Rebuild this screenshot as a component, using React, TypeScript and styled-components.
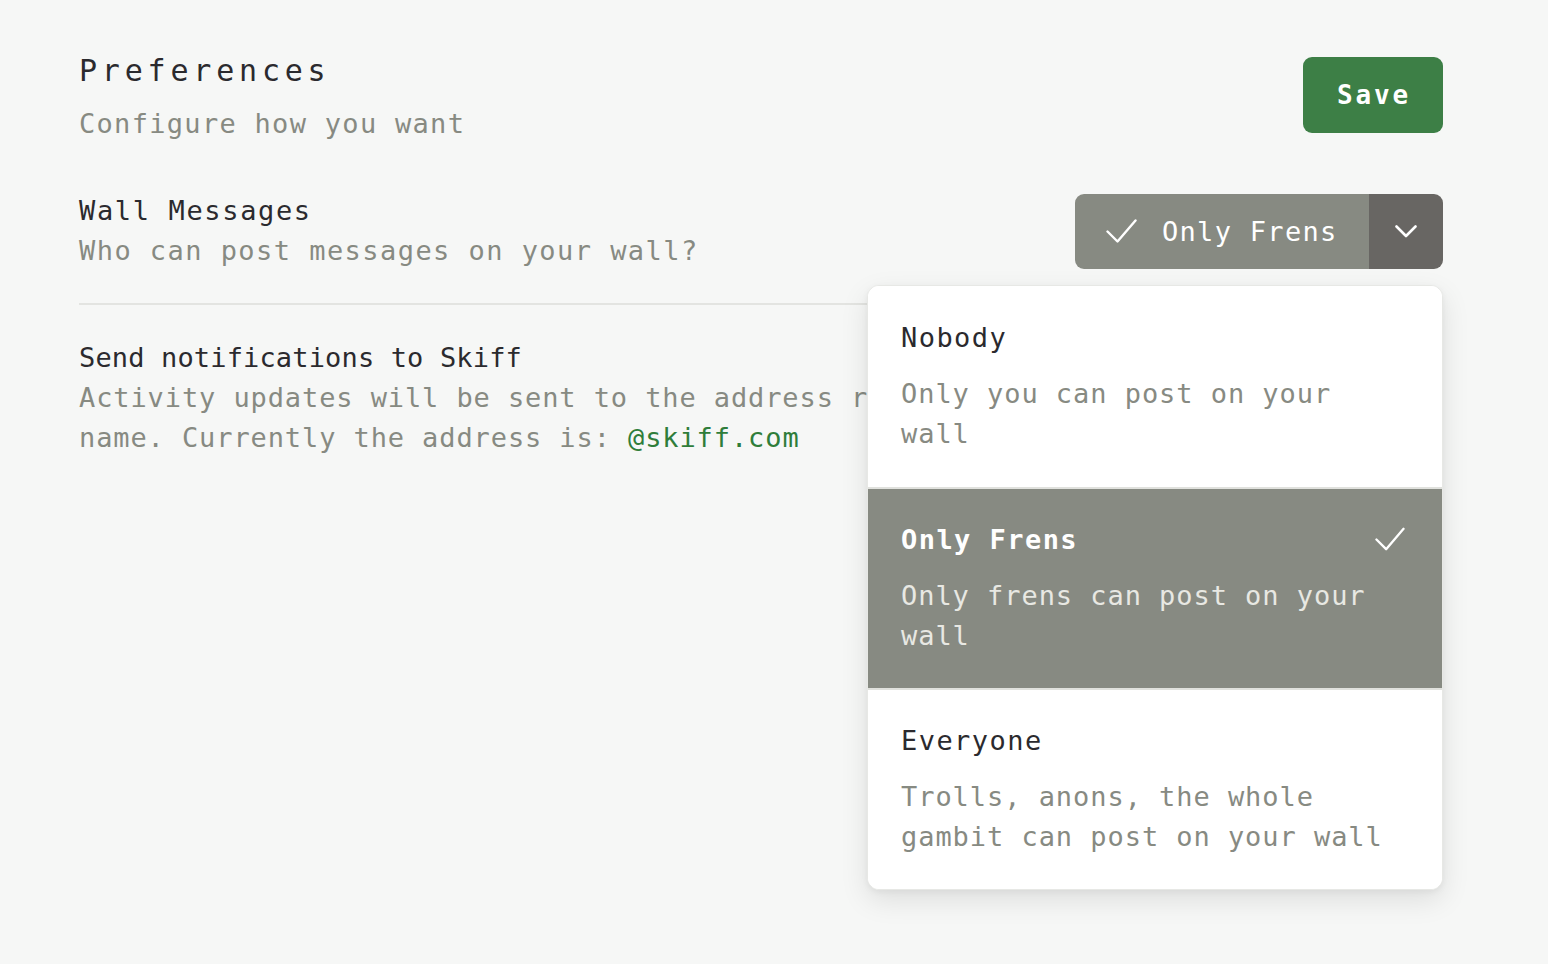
import React from "react";
import styled, { createGlobalStyle } from "styled-components";

const Global = createGlobalStyle`
  html, body { margin: 0; padding: 0; background: #f6f7f6; }
  body { font-family: "DejaVu Sans Mono", "Liberation Mono", monospace; }
  * { box-sizing: border-box; }
`;

const Page = styled.div`
  width: 1548px;
  min-height: 964px;
  padding: 51px 105px 0 79px;
`;

const Header = styled.header`
  display: flex;
  align-items: flex-start;
  justify-content: space-between;
`;

const Title = styled.h1`
  margin: 0;
  font-size: 30px;
  line-height: 40px;
  font-weight: 400;
  letter-spacing: 4.8px;
  color: #2b2a2e;
`;

const Subtitle = styled.p`
  margin: 13px 0 0;
  font-size: 27px;
  line-height: 40px;
  letter-spacing: 1.3px;
  color: #878a82;
`;

const SaveButton = styled.button`
  margin-top: 6px;
  width: 140px;
  height: 76px;
  border: none;
  border-radius: 9px;
  background: #3d7f46;
  color: #ffffff;
  font-family: inherit;
  font-size: 26px;
  font-weight: 700;
  letter-spacing: 2.8px;
  padding: 0 0 0 2px;
`;

const Section = styled.section<{ $divider?: boolean }>`
  display: flex;
  align-items: center;
  justify-content: space-between;
  padding-bottom: ${(p) => (p.$divider ? "32px" : "0")};
  border-bottom: ${(p) => (p.$divider ? "2px solid #e3e4e1" : "none")};
`;

const FirstSection = styled(Section)`
  margin-top: 47px;
`;

const NotifySection = styled(Section)`
  padding-top: 33px;
`;

const TextBlock = styled.div`
  max-width: 1220px;
`;

const Label = styled.div<{ $tight?: boolean }>`
  font-size: 27px;
  line-height: 40px;
  letter-spacing: ${(p) => (p.$tight ? "0.15px" : "1.65px")};
  color: #2b2a2e;
`;

const Description = styled.div<{ $tight?: boolean }>`
  font-size: 27px;
  line-height: 40px;
  letter-spacing: ${(p) => (p.$tight ? "0.9px" : "1.45px")};
  color: #878a82;
`;

const Link = styled.span`
  color: #2f7d3a;
`;

const Select = styled.div`
  position: relative;
  display: flex;
  width: 368px;
  height: 75px;
`;

const SelectValue = styled.div`
  flex: 1;
  display: flex;
  align-items: center;
  gap: 25px;
  padding-left: 31px;
  background: #878a82;
  border-radius: 9px 0 0 9px;
  color: #ffffff;
  font-size: 27px;
  letter-spacing: 1.3px;
`;

const SelectToggle = styled.div`
  width: 74px;
  display: flex;
  align-items: center;
  justify-content: center;
  background: #686663;
  border-radius: 0 9px 9px 0;
`;

const Menu = styled.div`
  position: absolute;
  top: calc(100% + 16px);
  right: 0;
  width: 576px;
  background: #ffffff;
  border: 1px solid #e7e8e5;
  border-radius: 12px;
  box-shadow: 0 10px 28px rgba(0, 0, 0, 0.1), 0 2px 6px rgba(0, 0, 0, 0.05);
  overflow: hidden;
  z-index: 2;
`;

const Option = styled.div<{ $selected?: boolean }>`
  height: 201px;
  padding: 32px 37px 0 33px;
  background: ${(p) => (p.$selected ? "#878a82" : "#ffffff")};
  & + & {
    border-top: 2px solid #e0e1dd;
    padding-top: 31px;
  }
`;

const OptionHead = styled.div`
  display: flex;
  align-items: center;
  justify-content: space-between;
`;

const OptionTitle = styled.div<{ $selected?: boolean }>`
  font-size: 27px;
  line-height: 40px;
  letter-spacing: 1.45px;
  font-weight: ${(p) => (p.$selected ? 700 : 400)};
  color: ${(p) => (p.$selected ? "#ffffff" : "#2b2a2e")};
`;

const OptionDesc = styled.div<{ $selected?: boolean }>`
  margin-top: 16px;
  font-size: 27px;
  line-height: 40px;
  letter-spacing: 0.95px;
  color: ${(p) => (p.$selected ? "#e8e8e3" : "#878a82")};
`;

const Check = ({ w = 31, h = 25 }: { w?: number; h?: number }) => (
  <svg width={w} height={h} viewBox="0 0 31 25" fill="none">
    <path d="M1.5 12.5 L11.5 22.5 L29.5 1.5" stroke="#ffffff" strokeWidth="2.4" strokeLinecap="round" strokeLinejoin="round" />
  </svg>
);

const Chevron = () => (
  <svg width="22" height="13" viewBox="0 0 22 13" fill="none">
    <path d="M1.5 1.5 L11 11 L20.5 1.5" stroke="#ffffff" strokeWidth="2.6" strokeLinecap="round" strokeLinejoin="round" />
  </svg>
);

const options = [
  { title: "Nobody", desc: "Only you can post on your wall" },
  { title: "Only Frens", desc: "Only frens can post on your wall", selected: true },
  { title: "Everyone", desc: "Trolls, anons, the whole gambit can post on your wall" },
];

export default function App() {
  return (
    <>
      <Global />
      <Page>
        <Header>
          <div>
            <Title>Preferences</Title>
            <Subtitle>Configure how you want</Subtitle>
          </div>
          <SaveButton>Save</SaveButton>
        </Header>

        <FirstSection $divider>
          <TextBlock>
            <Label>Wall Messages</Label>
            <Description>Who can post messages on your wall?</Description>
          </TextBlock>
          <Select>
            <SelectValue>
              <Check />
              <span>Only Frens</span>
            </SelectValue>
            <SelectToggle>
              <Chevron />
            </SelectToggle>
            <Menu>
              {options.map((o) => (
                <Option key={o.title} $selected={o.selected}>
                  <OptionHead>
                    <OptionTitle $selected={o.selected}>{o.title}</OptionTitle>
                    {o.selected && <Check w={30} h={25} />}
                  </OptionHead>
                  <OptionDesc $selected={o.selected}>{o.desc}</OptionDesc>
                </Option>
              ))}
            </Menu>
          </Select>
        </FirstSection>

        <NotifySection>
          <TextBlock>
            <Label $tight>Send notifications to Skiff</Label>
            <Description $tight>
              Activity updates will be sent to the address registered to your Skiff name. Currently the
              address is: <Link>@skiff.com</Link>
            </Description>
          </TextBlock>
        </NotifySection>
      </Page>
    </>
  );
}
